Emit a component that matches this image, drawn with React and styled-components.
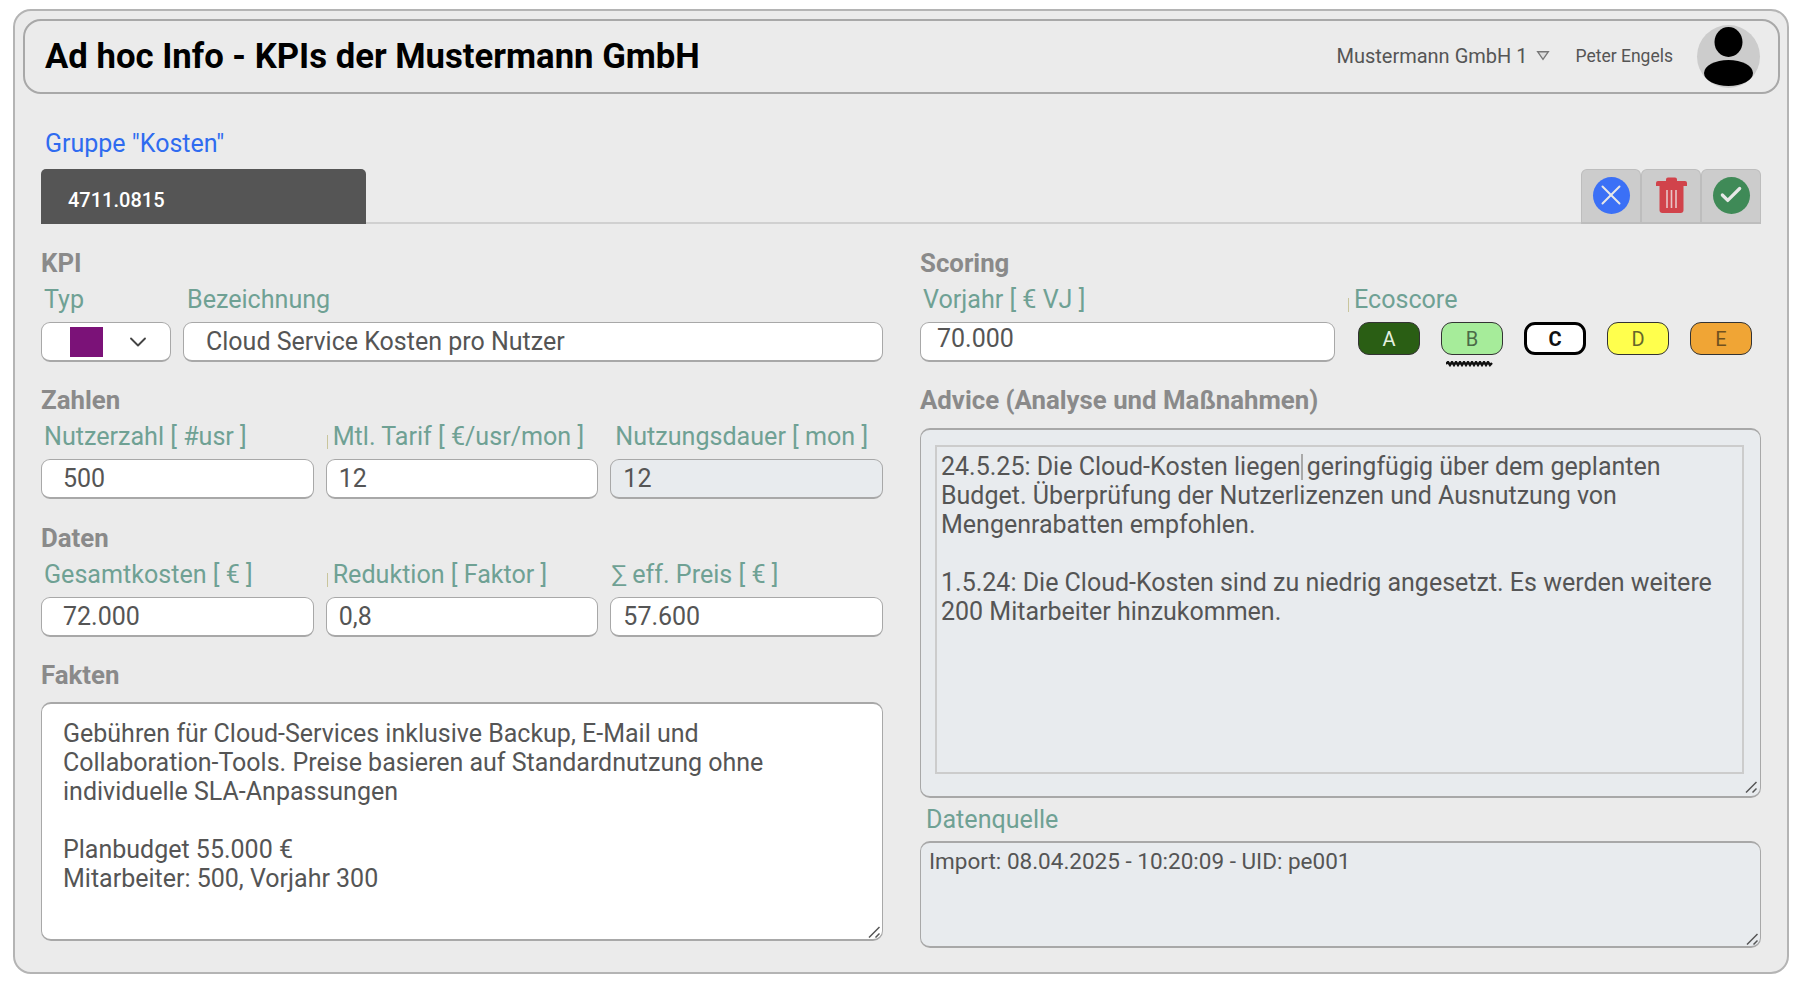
import React from 'react';
import styled, { createGlobalStyle } from 'styled-components';
import { FiChevronDown, FiX, FiCheck } from 'react-icons/fi';

const GlobalStyle = createGlobalStyle`
  html, body { margin: 0; padding: 0; background: #fff; }
  body { font-family: Roboto, "Liberation Sans", sans-serif; color: #555; }
  * { box-sizing: border-box; }
`;

const Panel = styled.div`
  width: 1776px;
  height: 965px;
  margin: 9px 0 0 13px;
  padding: 8px 9px 0;
  background: #ebebeb;
  border: 2px solid #b4b4b4;
  border-radius: 18px;
`;

const Header = styled.header`
  display: flex;
  align-items: center;
  height: 75px;
  padding: 0 18px 1px 20px;
  margin: 0 -2px 0 -1px;
  border: 2px solid #a8a8a8;
  border-radius: 18px;
`;

const Title = styled.h1`
  flex: 1;
  margin: 0;
  font-size: 34.7px;
  font-weight: 700;
  color: #000;
`;

const Company = styled.span`
  font-size: 20px;
  color: #555;
`;

const Caret = styled.svg`
  width: 14px;
  height: 11px;
  margin: 0 26px 2px 8px;
`;

const UserName = styled.span`
  font-size: 17.5px;
  color: #555;
  margin-right: 24px;
`;

const Avatar = styled.div`
  width: 63px;
  height: 63px;
  border-radius: 50%;
  background: #ccc;
`;

const Body = styled.div`
  padding: 0 17px;
`;

const Group = styled.div`
  margin-top: 34px;
  padding-left: 4px;
  font-size: 25px;
  line-height: 32px;
  color: #2f6bf0;
`;

const TabBar = styled.div`
  display: flex;
  justify-content: space-between;
  align-items: flex-end;
  height: 56px;
  margin-top: 8px;
  border-bottom: 2px solid #d0d0d0;
`;

const Tab = styled.div`
  width: 325px;
  height: 55px;
  padding: 19px 0 0 27px;
  margin-bottom: -2px;
  background: #555;
  border-radius: 5px 5px 0 0;
  color: #fff;
  font-size: 20px;
  font-weight: 500;
`;

const ActionBar = styled.div`
  display: flex;
  margin-bottom: -2px;
`;

const ActionButton = styled.button`
  display: flex;
  align-items: center;
  justify-content: center;
  width: 60px;
  height: 55px;
  padding: 0 0 2px;
  background: #ccc;
  border: 1px solid #bdbdbd;
  border-bottom: 2px solid #bdbdbd;
  border-radius: 6px 6px 0 0;
`;

const RoundIcon = styled.span`
  display: flex;
  align-items: center;
  justify-content: center;
  width: 37px;
  height: 37px;
  border-radius: 50%;
  background: ${p => p.$color};
  color: #e8e8e8;
  font-size: ${p => p.$size}px;
`;

const Columns = styled.div`
  display: grid;
  grid-template-columns: 842px 841px;
  column-gap: 37px;
`;

const Column = styled.div`
  min-width: 0;
`;

const SectionTitle = styled.div`
  height: 24px;
  margin-top: ${p => p.$top || 0}px;
  font-size: 25.8px;
  line-height: 26px;
  font-weight: 700;
  color: #8a8a8a;
`;

const Row = styled.div`
  display: grid;
  grid-template-columns: ${p => p.$cols};
  column-gap: ${p => p.$gap ?? 12}px;
`;

const Field = styled.div`
  min-width: 0;
`;

const Label = styled.label`
  position: relative;
  display: block;
  height: 29px;
  margin-top: ${p => p.$top ?? 11}px;
  margin-bottom: ${p => p.$bottom ?? 8}px;
  padding-left: ${p => p.$indent ?? 3}px;
  font-size: 25.1px;
  line-height: 29px;
  color: #6fa194;
  white-space: nowrap;

  ${p => p.$tick != null && `
    &::before {
      content: '';
      position: absolute;
      left: ${p.$tick}px;
      top: 13px;
      width: 1px;
      height: 14px;
      background: #c9c59c;
    }
  `}
`;

const Input = styled.input`
  display: block;
  width: 100%;
  height: 40px;
  padding: 0 8px ${p => p.$lift || 0}px ${p => p.$pad ?? 12}px;
  background: ${p => (p.disabled ? '#e8ebee' : '#fff')};
  border: 1px solid #a8a8a8;
  border-bottom-width: 2px;
  border-radius: 9px;
  outline: none;
  font: 400 25px Roboto, sans-serif;
  color: #555;
  opacity: 1;
`;

const Select = styled.div`
  display: flex;
  align-items: center;
  justify-content: space-between;
  height: 40px;
  padding: 0 18px 0 28px;
  background: #fff;
  border: 1px solid #a8a8a8;
  border-bottom-width: 2px;
  border-radius: 9px;
  color: #444;
  font-size: 28px;
`;

const Swatch = styled.span`
  width: 33px;
  height: 30px;
  background: ${p => p.$color};
`;

const ScoreRow = styled.div`
  display: flex;
  justify-content: space-between;
  padding-left: 10px;
  padding-right: 9px;
`;

const Score = styled.div`
  position: relative;
  display: flex;
  align-items: center;
  justify-content: center;
  width: 62px;
  height: 33px;
  border: ${p => p.$thick ? 3 : 1.5}px solid ${p => p.$thick ? '#000' : '#333'};
  border-radius: 11px;
  background: ${p => p.$bg};
  color: ${p => p.$fg};
  font-size: 20px;
  font-weight: ${p => (p.$thick ? 700 : 400)};
`;

const Squiggle = styled.svg`
  position: absolute;
  left: 4px;
  top: 38px;
  width: 52px;
  height: 6px;
`;

const NoteWrap = styled.div`
  position: relative;
  margin-top: ${p => p.$top || 0}px;
`;

const Note = styled.textarea`
  display: block;
  width: 100%;
  height: ${p => p.$h}px;
  padding: ${p => p.$padY}px ${p => p.$padRight ?? p.$padX}px ${p => p.$padY}px ${p => p.$padX}px;
  background: ${p => p.$bg || '#fff'};
  border: 1px solid #a8a8a8;
  border-top-width: 2px;
  border-bottom-width: 2px;
  border-radius: 10px;
  outline: none;
  resize: none;
  font: 400 ${p => p.$size}px/${p => p.$line}px Roboto, sans-serif;
  color: #555;
`;

const Grip = styled.svg`
  position: absolute;
  right: 3px;
  bottom: 3px;
  width: 12px;
  height: 12px;
`;

const AdviceBox = styled.div`
  position: relative;
  height: 370px;
  margin-top: 17px;
  padding: 15px 16px 22px 14px;
  background: #e8ebee;
  border: 1px solid #a8a8a8;
  border-top-width: 2px;
  border-bottom-width: 2px;
  border-radius: 10px;
`;

const AdviceText = styled.div`
  height: 100%;
  padding: 5px 4px;
  border: 2px solid #ccc;
  font-size: 25px;
  line-height: 29px;
  white-space: pre-wrap;
  color: #555;
`;

const TextCursor = styled.span`
  display: inline-block;
  width: 2px;
  height: 26px;
  margin-right: -2px;
  vertical-align: -5px;
  background: #a9a9a9;
`;

const ResizeGrip = () => (
  <Grip viewBox="0 0 12 12">
    <path d="M1 11.5 11.5 1M7.5 11.5l4-4" fill="none" stroke="#555" strokeWidth="1.5" />
  </Grip>
);

const scores = [
  { id: 'A', bg: '#2a5e14', fg: '#e6f0e0' },
  { id: 'B', bg: '#a6ec9a', fg: '#4b6a48', mark: true },
  { id: 'C', bg: '#fff', fg: '#111', thick: true },
  { id: 'D', bg: '#ffff4d', fg: '#66662a' },
  { id: 'E', bg: '#f0a535', fg: '#70511f' },
];

const App = () => (
  <>
    <GlobalStyle />
    <Panel>
      <Header>
        <Title>Ad hoc Info - KPIs der Mustermann GmbH</Title>
        <Company>Mustermann GmbH 1</Company>
        <Caret viewBox="0 0 13 10">
          <path d="M1.5 1.5h10L6.5 8.5z" fill="#ddd" stroke="#777" strokeWidth="1.2" />
        </Caret>
        <UserName>Peter Engels</UserName>
        <Avatar>
          <svg width="63" height="63" viewBox="0 0 63 63">
            <ellipse cx="31.5" cy="17" rx="14" ry="15" fill="#000" />
            <ellipse cx="31.5" cy="48" rx="24.5" ry="13" fill="#000" />
          </svg>
        </Avatar>
      </Header>

      <Body>
        <Group>Gruppe "Kosten"</Group>
        <TabBar>
          <Tab>4711.0815</Tab>
          <ActionBar>
            <ActionButton aria-label="abbrechen">
              <RoundIcon $color="#3b70f6" $size={34}><FiX strokeWidth={1.4} /></RoundIcon>
            </ActionButton>
            <ActionButton aria-label="löschen">
              <svg width="31" height="36" viewBox="0 0 31 36">
                <path d="M10 4V2.5A2 2 0 0 1 12 .5h7a2 2 0 0 1 2 2V4h8a2 2 0 0 1 2 2v3H0V6a2 2 0 0 1 2-2z" fill="#d1434b" />
                <path d="M3.5 9h24v24a3 3 0 0 1-3 3h-18a3 3 0 0 1-3-3z" fill="#d1434b" />
                <path d="M11 13v18M15.5 13v18M20 13v18" stroke="#e8c5c7" strokeWidth="1.6" />
              </svg>
            </ActionButton>
            <ActionButton aria-label="speichern">
              <RoundIcon $color="#3f8a57" $size={26}><FiCheck strokeWidth={3} /></RoundIcon>
            </ActionButton>
          </ActionBar>
        </TabBar>

        <Columns>
          <Column>
            <SectionTitle $top={26}>KPI</SectionTitle>
            <Row $cols="130px 1fr">
              <Field>
                <Label>Typ</Label>
                <Select>
                  <Swatch $color="#7b1278" />
                  <FiChevronDown strokeWidth={1.6} />
                </Select>
              </Field>
              <Field>
                <Label $indent={4}>Bezeichnung</Label>
                <Input $pad={22} readOnly value="Cloud Service Kosten pro Nutzer" />
              </Field>
            </Row>

            <SectionTitle $top={25}>Zahlen</SectionTitle>
            <Row $cols="repeat(3, 1fr)">
              <Field>
                <Label>Nutzerzahl [ #usr ]</Label>
                <Input $pad={21} readOnly value="500" />
              </Field>
              <Field>
                <Label $indent={7} $tick={1}>Mtl. Tarif [ €/usr/mon ]</Label>
                <Input readOnly value="12" />
              </Field>
              <Field>
                <Label $indent={5}>Nutzungsdauer [ mon ]</Label>
                <Input disabled value="12" />
              </Field>
            </Row>

            <SectionTitle $top={26}>Daten</SectionTitle>
            <Row $cols="repeat(3, 1fr)">
              <Field>
                <Label>Gesamtkosten [ € ]</Label>
                <Input $pad={21} readOnly value="72.000" />
              </Field>
              <Field>
                <Label $indent={7} $tick={1}>Reduktion [ Faktor ]</Label>
                <Input readOnly value="0,8" />
              </Field>
              <Field>
                <Label $indent={1}>∑ eff. Preis [ € ]</Label>
                <Input readOnly value="57.600" />
              </Field>
            </Row>

            <SectionTitle $top={25}>Fakten</SectionTitle>
            <NoteWrap $top={16}>
              <Note
                $h={239}
                $padY={15}
                $padX={21}
                $padRight={60}
                $size={25}
                $line={29}
                readOnly
                value={'Gebühren für Cloud-Services inklusive Backup, E-Mail und Collaboration-Tools. Preise basieren auf Standardnutzung ohne individuelle SLA-Anpassungen\n\nPlanbudget 55.000 €\nMitarbeiter: 500, Vorjahr 300'}
              />
              <ResizeGrip />
            </NoteWrap>
          </Column>

          <Column>
            <SectionTitle $top={26}>Scoring</SectionTitle>
            <Row $cols="415px 1fr" $gap={13}>
              <Field>
                <Label>Vorjahr [ € VJ ]</Label>
                <Input $pad={16} $lift={6} readOnly value="70.000" />
              </Field>
              <Field>
                <Label $indent={6} $tick={0}>Ecoscore</Label>
                <ScoreRow>
                  {scores.map(s => (
                    <Score key={s.id} $bg={s.bg} $fg={s.fg} $thick={s.thick}>
                      {s.id}
                      {s.mark && (
                        <Squiggle viewBox="0 0 52 6">
                          <path
                            d="M0 3l2-2 2 3 2-3 2 3 2-3 2 3 2-3 2 3 2-3 2 3 2-3 2 3 2-3 2 3 2-3 2 3 2-3 2 3 2-3 2 3 2-3 2 3 2-2"
                            fill="none"
                            stroke="#111"
                            strokeWidth="2.4"
                          />
                        </Squiggle>
                      )}
                    </Score>
                  ))}
                </ScoreRow>
              </Field>
            </Row>

            <SectionTitle $top={25}>Advice (Analyse und Maßnahmen)</SectionTitle>
            <AdviceBox>
              <AdviceText>
                24.5.25: Die Cloud-Kosten liegen<TextCursor /> geringfügig über dem geplanten Budget. Überprüfung der Nutzerlizenzen und Ausnutzung von Mengenrabatten empfohlen.{'\n\n'}1.5.24: Die Cloud-Kosten sind zu niedrig angesetzt. Es werden weitere 200 Mitarbeiter hinzukommen.
              </AdviceText>
              <ResizeGrip />
            </AdviceBox>
            <Label $indent={6} $top={7} $bottom={7}>Datenquelle</Label>
            <NoteWrap>
              <Note
                $h={107}
                $bg="#e8ebee"
                $padY={5}
                $padX={8}
                $size={22.5}
                $line={26}
                readOnly
                value="Import: 08.04.2025 - 10:20:09 - UID: pe001"
              />
              <ResizeGrip />
            </NoteWrap>
          </Column>
        </Columns>
      </Body>
    </Panel>
  </>
);

export default App;
